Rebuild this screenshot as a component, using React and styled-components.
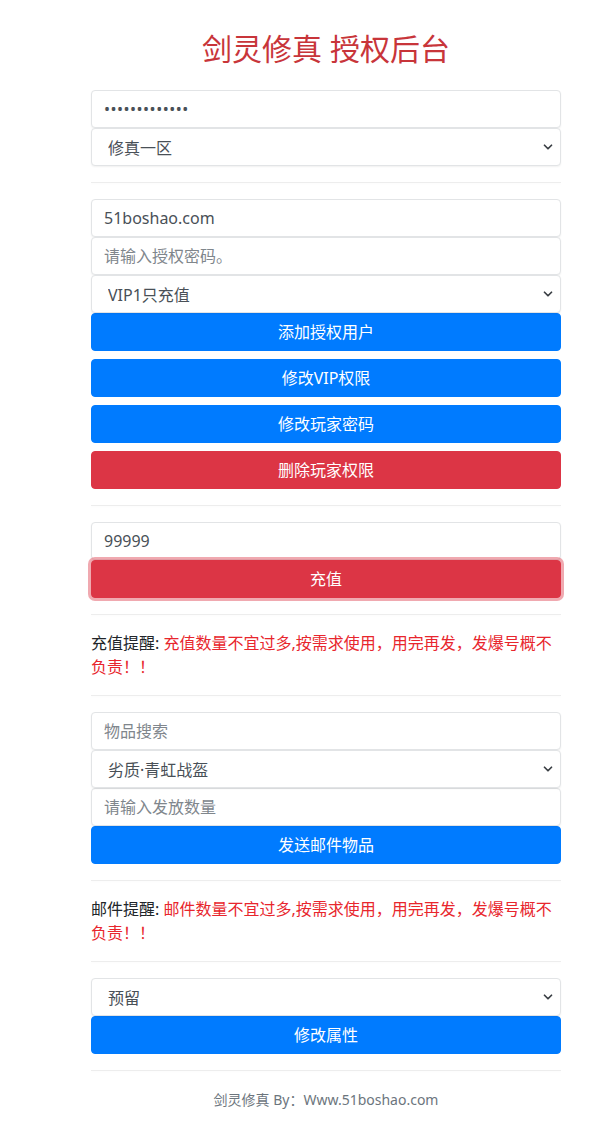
import React from "react";
import styled, { createGlobalStyle } from "styled-components";
import { ChevronDown } from "lucide-react";

const Global = createGlobalStyle`
  html, body { margin: 0; padding: 0; background: #fff; }
  body {
    font-family: "Segoe UI", "Noto Sans", "Noto Sans CJK SC", sans-serif;
    font-size: 16px;
    line-height: 1.5;
    color: #212529;
  }
  * { box-sizing: border-box; }
`;

const Container = styled.div`
  width: 470px;
  margin-left: 91px;
  padding-top: 31px;
  padding-bottom: 20px;
`;

const Title = styled.h1`
  margin: 0 0 23px;
  font-size: 30px;
  font-weight: 400;
  line-height: 36px;
  text-align: center;
  color: #c8353a;
`;

const Group = styled.div`
  display: flex;
  flex-direction: column;
`;

const Input = styled.input`
  display: block;
  width: 100%;
  height: 38px;
  padding: 6px 12px;
  font: inherit;
  font-size: 16px;
  color: #495057;
  background: #fff;
  border: 1px solid #e2e4e6;
  border-radius: 4px;
  box-shadow: 0 1px 2px rgba(0, 0, 0, 0.06);
  outline: none;
  &[type="password"] { letter-spacing: 0.5px; }
  &::placeholder { color: #80868c; }
`;

const SelectWrap = styled.div`
  position: relative;
  width: 100%;
`;

const Select = styled.select`
  display: block;
  width: 100%;
  height: 38px;
  padding: 7px 32px 5px 16px;
  font: inherit;
  font-size: 16px;
  color: #495057;
  background: #fff;
  border: 1px solid #e2e4e6;
  border-radius: 4px;
  box-shadow: 0 1px 2px rgba(0, 0, 0, 0.06);
  appearance: none;
  -webkit-appearance: none;
  outline: none;
`;

const Arrow = styled.span`
  position: absolute;
  right: 6px;
  top: 12px;
  display: flex;
  color: #3a3f44;
  pointer-events: none;
`;

const Button = styled.button`
  display: block;
  width: 100%;
  height: 38px;
  padding: 0 12px;
  font: inherit;
  font-size: 16px;
  color: #fff;
  text-align: center;
  border: 1px solid ${(p) => (p.$danger ? "#dc3545" : "#007bff")};
  background: ${(p) => (p.$danger ? "#dc3545" : "#007bff")};
  border-radius: 4px;
  box-shadow: ${(p) => (p.$focus ? "0 0 0 3px rgba(225, 83, 97, 0.5)" : "none")};
  cursor: pointer;
  & + & { margin-top: 8px; }
`;

const Rule = styled.hr`
  margin: 16px 0;
  border: 0;
  border-top: 1px solid rgba(0, 0, 0, 0.07);
  box-shadow: 0 1px 3px rgba(0, 0, 0, 0.03);
`;

const Notice = styled.p`
  margin: 0 0 16px;
  font-size: 16px;
  line-height: 24px;
  color: #212529;
`;

const Warn = styled.span`
  color: #e8262d;
`;

const Footer = styled.div`
  text-align: center;
  font-size: 14px;
  line-height: 21px;
  color: #6c757d;
  padding-top: 2px;
`;

function Dropdown({ value }) {
  return (
    <SelectWrap>
      <Select defaultValue={value}>
        <option>{value}</option>
      </Select>
      <Arrow>
        <ChevronDown size={14} strokeWidth={3} />
      </Arrow>
    </SelectWrap>
  );
}

export default function App() {
  return (
    <>
      <Global />
      <Container>
        <Title>剑灵修真 授权后台</Title>
        <Group>
          <Input type="password" defaultValue="1234567890123" />
          <Dropdown value="修真一区" />
        </Group>
        <Rule />
        <Group>
          <Input defaultValue="51boshao.com" />
          <Input placeholder="请输入授权密码。" />
          <Dropdown value="VIP1只充值" />
        </Group>
        <Button>添加授权用户</Button>
        <Button>修改VIP权限</Button>
        <Button>修改玩家密码</Button>
        <Button $danger>删除玩家权限</Button>
        <Rule />
        <Input defaultValue="99999" />
        <Button $danger $focus>充值</Button>
        <Rule />
        <Notice>
          充值提醒: <Warn>充值数量不宜过多,按需求使用，用完再发，发爆号概不负责！！</Warn>
        </Notice>
        <Rule />
        <Group>
          <Input placeholder="物品搜索" />
          <Dropdown value="劣质·青虹战盔" />
          <Input placeholder="请输入发放数量" />
        </Group>
        <Button>发送邮件物品</Button>
        <Rule />
        <Notice>
          邮件提醒: <Warn>邮件数量不宜过多,按需求使用，用完再发，发爆号概不负责！！</Warn>
        </Notice>
        <Rule />
        <Dropdown value="预留" />
        <Button>修改属性</Button>
        <Rule />
        <Footer>剑灵修真 By：Www.51boshao.com</Footer>
      </Container>
    </>
  );
}
